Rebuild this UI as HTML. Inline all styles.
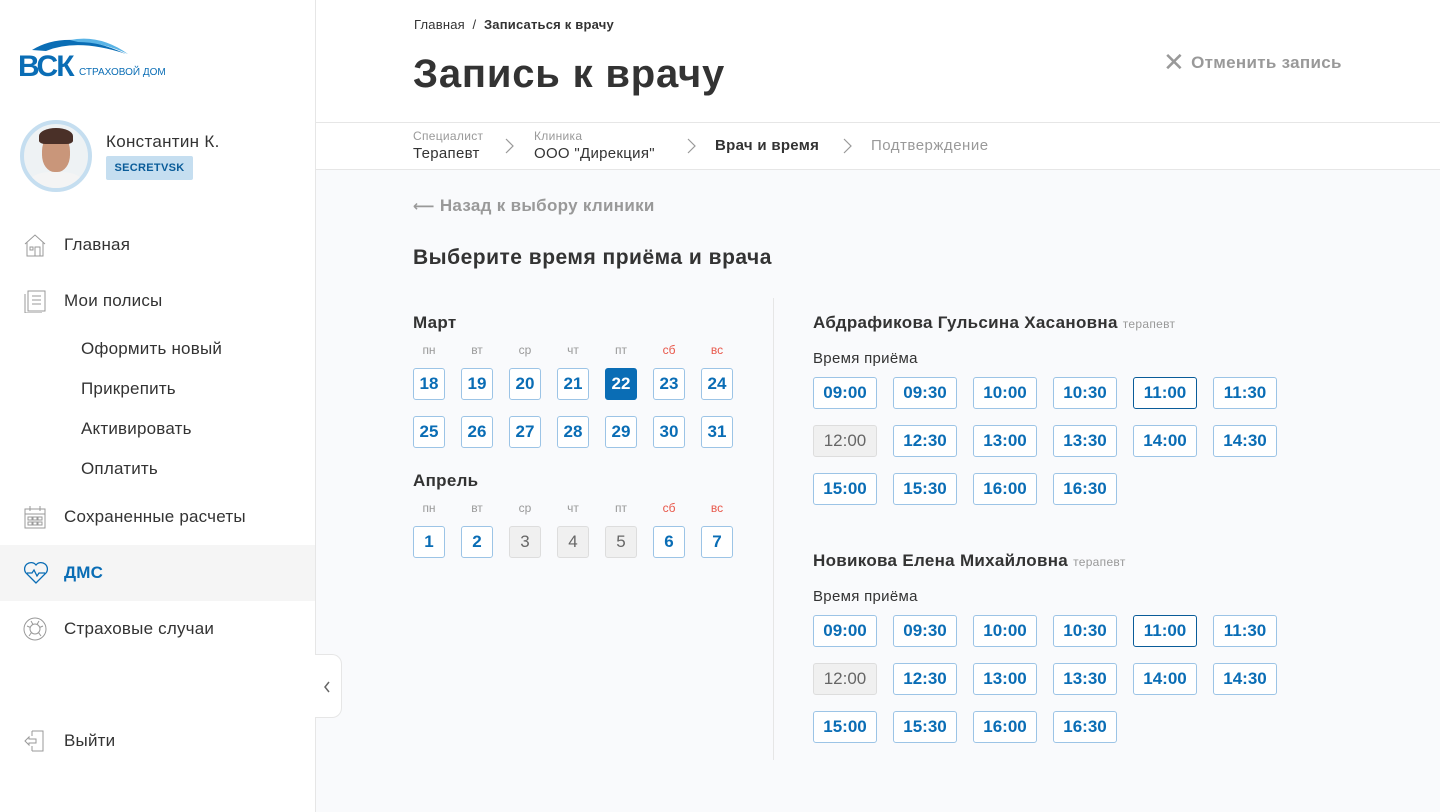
<!DOCTYPE html>
<html><head><meta charset="utf-8"><style>
*{box-sizing:border-box;margin:0;padding:0}
body{width:1440px;height:812px;overflow:hidden;font-family:"Liberation Sans","DejaVu Sans",sans-serif;background:#fff;color:#333;position:relative}
.abs{position:absolute}
.side{left:0;top:0;width:316px;height:812px;border-right:1px solid #e6e6e6;background:#fff}
.nav{position:absolute;left:0;width:315px;height:56px;display:flex;align-items:center;padding-left:64px;font-size:17px;color:#333;letter-spacing:.2px}
.nav svg{position:absolute;left:23px;top:16px}
.sub{position:absolute;left:81px;font-size:17px;color:#333;letter-spacing:.2px}
.main{left:316px;top:170px;width:1124px;height:642px;background:#f9fafc}
.d{position:absolute;width:32px;height:32px;border:1px solid #9cc4e6;border-radius:3px;background:#fff;color:#0a6db5;font-weight:bold;font-size:17px;text-align:center;line-height:30px}
.d.g{background:#f0f0f0;border-color:#ddd;color:#666;font-weight:normal}
.d.s{background:#0a6db5;border-color:#0a6db5;color:#fff}
.wd{position:absolute;width:32px;text-align:center;font-size:12px;color:#999}
.wd.r{color:#e8574a}
.t{position:absolute;width:64px;height:32px;border:1px solid #9cc4e6;border-radius:3px;background:#fff;color:#0a6db5;font-weight:bold;font-size:17px;text-align:center;line-height:30px}
.t.g{background:#f0f0f0;border-color:#ddd;color:#666;font-weight:normal}
.t.a{border-color:#0a5c99}
</style></head><body>
<div class="abs side">
 <svg class="abs" style="left:18px;top:34px" width="160" height="46" viewBox="0 0 160 46">
  <path d="M14 16 Q50 -6 108 20 Q60 4 28 17Z" fill="#0a6db5"/>
  <path d="M52 6 Q82 0 110 20 Q84 8 60 8Z" fill="#5ab4e6"/>
  <text x="0" y="42" font-family="Liberation Sans" font-weight="bold" font-size="30" fill="#0a6db5" letter-spacing="-2">ВСК</text>
  <text x="61" y="41" font-family="Liberation Sans" font-size="10" fill="#0a6db5">СТРАХОВОЙ ДОМ</text>
 </svg>
 <div class="abs" style="left:20px;top:120px;width:72px;height:72px;border-radius:50%;border:4px solid #c5def0;background:#eef2f4;overflow:hidden">
  <div class="abs" style="left:4px;top:48px;width:56px;height:30px;border-radius:40% 40% 0 0;background:#f4f4f4"></div>
  <div class="abs" style="left:18px;top:10px;width:28px;height:38px;border-radius:45%;background:#c9967a"></div>
  <div class="abs" style="left:15px;top:4px;width:34px;height:16px;border-radius:50% 50% 20% 20%;background:#4a3028"></div>
 </div>
 <div class="abs" style="left:106px;top:132px;font-size:17px;color:#333;letter-spacing:.3px">Константин К.</div>
 <div class="abs" style="left:106px;top:156px;width:87px;height:24px;background:#c5def0;border-radius:2px;color:#0a5c99;font-size:11px;font-weight:bold;text-align:center;line-height:24px;letter-spacing:.3px">SECRETVSK</div>
 <div class="nav" style="top:217px"><svg width="24" height="24" fill="none" stroke="#999" stroke-width="1"><path d="M2 11 L12 2 L22 11 M4 9 V23 H20 V9 M12 23 V14 H17 V23 M7 14 H10 V17 H7Z"/></svg>Главная</div>
 <div class="nav" style="top:273px"><svg width="24" height="24" fill="none" stroke="#999" stroke-width="1"><path d="M5 2 H22 V22 H5Z M2 5 V24 H19 M9 7 H18 M9 11 H18 M9 15 H18"/></svg>Мои полисы</div>
 <div class="sub" style="top:339px">Оформить новый</div>
 <div class="sub" style="top:379px">Прикрепить</div>
 <div class="sub" style="top:419px">Активировать</div>
 <div class="sub" style="top:459px">Оплатить</div>
 <div class="nav" style="top:489px"><svg width="24" height="24" fill="none" stroke="#999" stroke-width="1"><path d="M2 4 H22 V23 H2Z M2 9 H22 M7 1 V6 M17 1 V6 M5 12 H9 V15 H5Z M10 12 H14 V15 H10Z M15 12 H19 V15 H15Z M5 17 H9 V20 H5Z M10 17 H14 V20 H10Z M15 17 H19 V20 H15Z"/></svg>Сохраненные расчеты</div>
 <div class="nav" style="top:545px;background:#f5f5f5;color:#0a6db5;font-weight:bold"><svg width="26" height="24" fill="none" stroke="#0a6db5" stroke-width="1.3"><path d="M13 22 L3 12 A5.5 5.5 0 0 1 13 4 A5.5 5.5 0 0 1 23 12Z M4 12 H9 L11 9 L14 15 L16 12 H22"/></svg>ДМС</div>
 <div class="nav" style="top:601px"><svg width="24" height="24" fill="none" stroke="#999" stroke-width="1"><circle cx="12" cy="12" r="11"/><circle cx="12" cy="12" r="5"/><path d="M8 4 L10 7.5 M16 4 L14 7.5 M4 9 L7.5 10.5 M20 9 L16.5 10.5 M6 19 L8.5 15.5 M18 19 L15.5 15.5"/></svg>Страховые случаи</div>
 <div class="nav" style="top:713px"><svg width="24" height="24" fill="none" stroke="#999" stroke-width="1"><path d="M9 2 H20 V22 H9 M9 7 V2 M9 17 V22 M2 12 L6 8 V10 H13 V14 H6 V16Z"/></svg>Выйти</div>
</div>

<div class="abs" style="left:414px;top:17px;font-size:13px;color:#333;letter-spacing:.2px">Главная &nbsp;/&nbsp; <b>Записаться к врачу</b></div>
<div class="abs" style="left:413px;top:52px;font-size:40px;font-weight:bold;color:#333;letter-spacing:.8px">Запись к врачу</div>
<div class="abs" style="left:1163px;top:44px;font-size:17px;color:#999;font-weight:bold;letter-spacing:.3px"><span style="font-size:26px;font-weight:normal;position:relative;top:3px;margin-right:6px">✕</span>Отменить запись</div>
<div class="abs" style="left:316px;top:122px;width:1124px;height:1px;background:#e6e6e6"></div>
<div class="abs" style="left:413px;top:129px;font-size:12px;color:#999;letter-spacing:.3px">Специалист</div>
<div class="abs" style="left:413px;top:145px;font-size:15px;color:#333;letter-spacing:.3px">Терапевт</div>
<div class="abs" style="left:534px;top:129px;font-size:12px;color:#999;letter-spacing:.3px">Клиника</div>
<div class="abs" style="left:534px;top:145px;font-size:15px;color:#333;letter-spacing:.3px">ООО "Дирекция"</div>
<div class="abs" style="left:715px;top:137px;font-size:15px;color:#333;font-weight:bold;letter-spacing:.3px">Врач и время</div>
<div class="abs" style="left:871px;top:137px;font-size:15px;color:#999;letter-spacing:.5px">Подтверждение</div>
<svg class="abs" style="left:504px;top:137px" width="400" height="18" fill="none" stroke="#999" stroke-width="1.2"><path d="M2 2 L9 9 L2 16 M184 2 L191 9 L184 16 M340 2 L347 9 L340 16"/></svg>
<div class="abs main"></div>
<div class="abs" style="left:315px;top:654px;width:27px;height:64px;background:#fff;border:1px solid #e6e6e6;border-left:none;border-radius:0 10px 10px 0"><svg class="abs" style="left:7px;top:25px" width="10" height="14" fill="none" stroke="#666" stroke-width="1.5"><path d="M7 2 L3 7 L7 12"/></svg></div>
<div class="abs" style="left:316px;top:169px;width:1124px;height:1px;background:#e6e6e6"></div>
<div class="abs" style="left:413px;top:196px;font-size:17px;color:#999;font-weight:bold;letter-spacing:.3px"><span style="font-size:15px">⟵</span> Назад к выбору клиники</div>
<div class="abs" style="left:413px;top:246px;font-size:21px;color:#333;font-weight:bold;letter-spacing:.5px">Выберите время приёма и врача</div>
<div class="abs" style="left:773px;top:298px;width:1px;height:462px;background:#e6e6e6"></div>
<div class="abs" style="left:413px;top:313px;font-size:17px;font-weight:bold;color:#333;letter-spacing:.3px">Март</div>
<div class="abs" style="left:413px;top:471px;font-size:17px;font-weight:bold;color:#333;letter-spacing:.3px">Апрель</div>
<div id="cal"></div>
<div class="abs" style="left:813px;top:313px;font-size:17px;font-weight:bold;color:#333;letter-spacing:.3px">Абдрафикова Гульсина Хасановна <span style="font-size:12px;color:#999;font-weight:normal">терапевт</span></div>
<div class="abs" style="left:813px;top:350px;font-size:15px;color:#333;letter-spacing:.3px">Время приёма</div>
<div class="abs" style="left:813px;top:551px;font-size:17px;font-weight:bold;color:#333;letter-spacing:.3px">Новикова Елена Михайловна <span style="font-size:12px;color:#999;font-weight:normal">терапевт</span></div>
<div class="abs" style="left:813px;top:588px;font-size:15px;color:#333;letter-spacing:.3px">Время приёма</div>
<div id="times"></div>
<script>
var wd=['пн','вт','ср','чт','пт','сб','вс'],h='';
[343,501].forEach(function(y){wd.forEach(function(w,i){h+='<div class="wd'+(i>4?' r':'')+'" style="left:'+(413+48*i)+'px;top:'+y+'px">'+w+'</div>'})});
for(var i=0;i<14;i++){var n=18+i,c=n==22?' s':'';h+='<div class="d'+c+'" style="left:'+(413+48*(i%7))+'px;top:'+(368+48*Math.floor(i/7))+'px">'+n+'</div>'}
for(var i=0;i<7;i++){h+='<div class="d'+(i>=2&&i<=4?' g':'')+'" style="left:'+(413+48*i)+'px;top:526px">'+(i+1)+'</div>'}
document.getElementById('cal').innerHTML=h;
var ts=['09:00','09:30','10:00','10:30','11:00','11:30','12:00','12:30','13:00','13:30','14:00','14:30','15:00','15:30','16:00','16:30'];h='';
[377,615].forEach(function(y0){ts.forEach(function(t,i){var c=t=='12:00'?' g':(t=='11:00'?' a':'');h+='<div class="t'+c+'" style="left:'+(813+80*(i%6))+'px;top:'+(y0+48*Math.floor(i/6))+'px">'+t+'</div>'})});
document.getElementById('times').innerHTML=h;
</script>
</body></html>
